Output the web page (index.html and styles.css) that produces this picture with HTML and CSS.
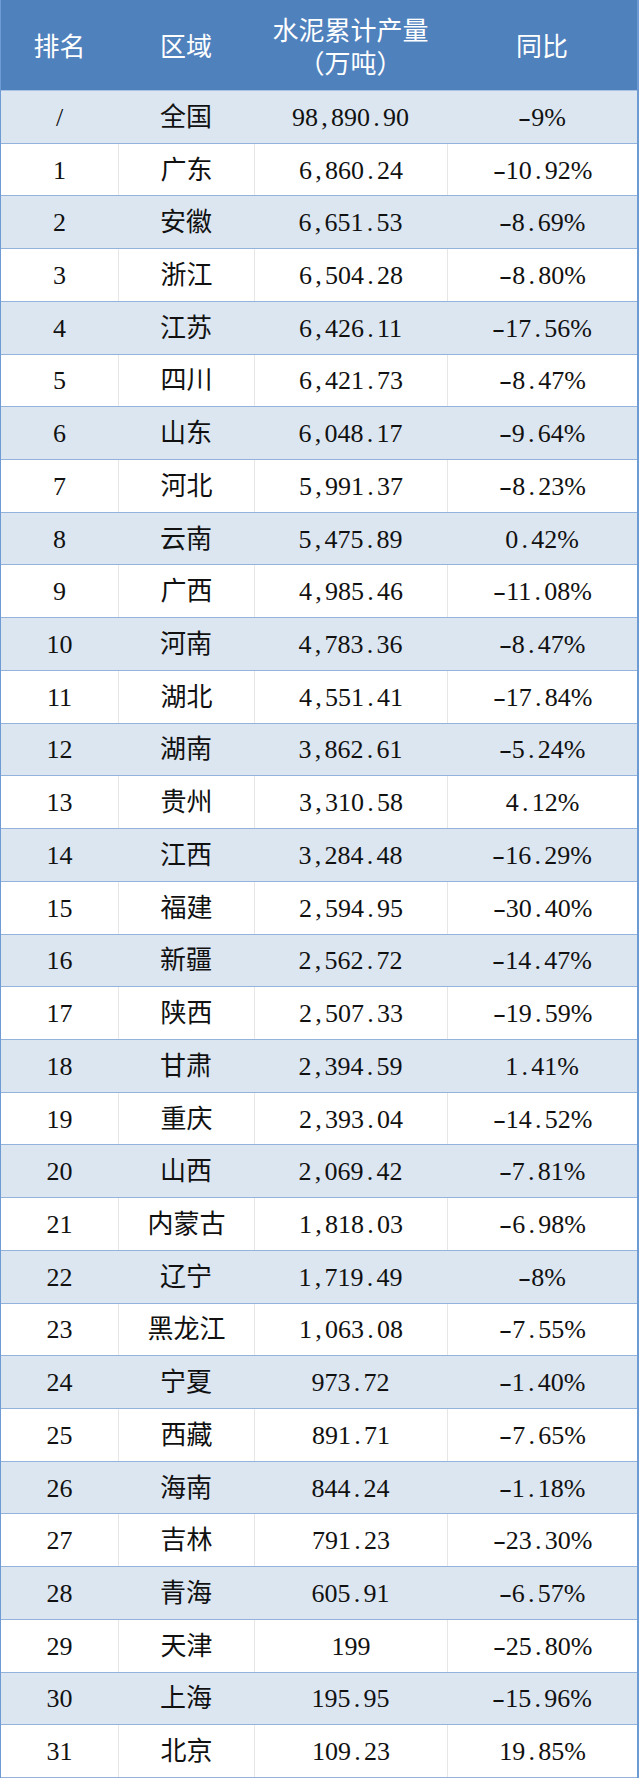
FILE: index.html
```html
<!DOCTYPE html>
<html lang="zh-CN">
<head>
<meta charset="utf-8">
<title>水泥累计产量</title>
<link rel="stylesheet" href="styles.css">
</head>
<body>
<div class="table">
  <div class="head">
    <div class="c">排名</div>
    <div class="c">区域</div>
    <div class="c two">水泥累计产量<br>（万吨）</div>
    <div class="c">同比</div>
  </div>
  <div class="row alt"><div class="c">/</div><div class="c">全国</div><div class="c">98<span class="p">,</span>890<span class="p">.</span>90</div><div class="c"><span class="m">-</span>9%</div></div>
  <div class="row"><div class="c">1</div><div class="c">广东</div><div class="c">6<span class="p">,</span>860<span class="p">.</span>24</div><div class="c"><span class="m">-</span>10<span class="p">.</span>92%</div></div>
  <div class="row alt"><div class="c">2</div><div class="c">安徽</div><div class="c">6<span class="p">,</span>651<span class="p">.</span>53</div><div class="c"><span class="m">-</span>8<span class="p">.</span>69%</div></div>
  <div class="row"><div class="c">3</div><div class="c">浙江</div><div class="c">6<span class="p">,</span>504<span class="p">.</span>28</div><div class="c"><span class="m">-</span>8<span class="p">.</span>80%</div></div>
  <div class="row alt"><div class="c">4</div><div class="c">江苏</div><div class="c">6<span class="p">,</span>426<span class="p">.</span>11</div><div class="c"><span class="m">-</span>17<span class="p">.</span>56%</div></div>
  <div class="row"><div class="c">5</div><div class="c">四川</div><div class="c">6<span class="p">,</span>421<span class="p">.</span>73</div><div class="c"><span class="m">-</span>8<span class="p">.</span>47%</div></div>
  <div class="row alt"><div class="c">6</div><div class="c">山东</div><div class="c">6<span class="p">,</span>048<span class="p">.</span>17</div><div class="c"><span class="m">-</span>9<span class="p">.</span>64%</div></div>
  <div class="row"><div class="c">7</div><div class="c">河北</div><div class="c">5<span class="p">,</span>991<span class="p">.</span>37</div><div class="c"><span class="m">-</span>8<span class="p">.</span>23%</div></div>
  <div class="row alt"><div class="c">8</div><div class="c">云南</div><div class="c">5<span class="p">,</span>475<span class="p">.</span>89</div><div class="c">0<span class="p">.</span>42%</div></div>
  <div class="row"><div class="c">9</div><div class="c">广西</div><div class="c">4<span class="p">,</span>985<span class="p">.</span>46</div><div class="c"><span class="m">-</span>11<span class="p">.</span>08%</div></div>
  <div class="row alt"><div class="c">10</div><div class="c">河南</div><div class="c">4<span class="p">,</span>783<span class="p">.</span>36</div><div class="c"><span class="m">-</span>8<span class="p">.</span>47%</div></div>
  <div class="row"><div class="c">11</div><div class="c">湖北</div><div class="c">4<span class="p">,</span>551<span class="p">.</span>41</div><div class="c"><span class="m">-</span>17<span class="p">.</span>84%</div></div>
  <div class="row alt"><div class="c">12</div><div class="c">湖南</div><div class="c">3<span class="p">,</span>862<span class="p">.</span>61</div><div class="c"><span class="m">-</span>5<span class="p">.</span>24%</div></div>
  <div class="row"><div class="c">13</div><div class="c">贵州</div><div class="c">3<span class="p">,</span>310<span class="p">.</span>58</div><div class="c">4<span class="p">.</span>12%</div></div>
  <div class="row alt"><div class="c">14</div><div class="c">江西</div><div class="c">3<span class="p">,</span>284<span class="p">.</span>48</div><div class="c"><span class="m">-</span>16<span class="p">.</span>29%</div></div>
  <div class="row"><div class="c">15</div><div class="c">福建</div><div class="c">2<span class="p">,</span>594<span class="p">.</span>95</div><div class="c"><span class="m">-</span>30<span class="p">.</span>40%</div></div>
  <div class="row alt"><div class="c">16</div><div class="c">新疆</div><div class="c">2<span class="p">,</span>562<span class="p">.</span>72</div><div class="c"><span class="m">-</span>14<span class="p">.</span>47%</div></div>
  <div class="row"><div class="c">17</div><div class="c">陕西</div><div class="c">2<span class="p">,</span>507<span class="p">.</span>33</div><div class="c"><span class="m">-</span>19<span class="p">.</span>59%</div></div>
  <div class="row alt"><div class="c">18</div><div class="c">甘肃</div><div class="c">2<span class="p">,</span>394<span class="p">.</span>59</div><div class="c">1<span class="p">.</span>41%</div></div>
  <div class="row"><div class="c">19</div><div class="c">重庆</div><div class="c">2<span class="p">,</span>393<span class="p">.</span>04</div><div class="c"><span class="m">-</span>14<span class="p">.</span>52%</div></div>
  <div class="row alt"><div class="c">20</div><div class="c">山西</div><div class="c">2<span class="p">,</span>069<span class="p">.</span>42</div><div class="c"><span class="m">-</span>7<span class="p">.</span>81%</div></div>
  <div class="row"><div class="c">21</div><div class="c">内蒙古</div><div class="c">1<span class="p">,</span>818<span class="p">.</span>03</div><div class="c"><span class="m">-</span>6<span class="p">.</span>98%</div></div>
  <div class="row alt"><div class="c">22</div><div class="c">辽宁</div><div class="c">1<span class="p">,</span>719<span class="p">.</span>49</div><div class="c"><span class="m">-</span>8%</div></div>
  <div class="row"><div class="c">23</div><div class="c">黑龙江</div><div class="c">1<span class="p">,</span>063<span class="p">.</span>08</div><div class="c"><span class="m">-</span>7<span class="p">.</span>55%</div></div>
  <div class="row alt"><div class="c">24</div><div class="c">宁夏</div><div class="c">973<span class="p">.</span>72</div><div class="c"><span class="m">-</span>1<span class="p">.</span>40%</div></div>
  <div class="row"><div class="c">25</div><div class="c">西藏</div><div class="c">891<span class="p">.</span>71</div><div class="c"><span class="m">-</span>7<span class="p">.</span>65%</div></div>
  <div class="row alt"><div class="c">26</div><div class="c">海南</div><div class="c">844<span class="p">.</span>24</div><div class="c"><span class="m">-</span>1<span class="p">.</span>18%</div></div>
  <div class="row"><div class="c">27</div><div class="c">吉林</div><div class="c">791<span class="p">.</span>23</div><div class="c"><span class="m">-</span>23<span class="p">.</span>30%</div></div>
  <div class="row alt"><div class="c">28</div><div class="c">青海</div><div class="c">605<span class="p">.</span>91</div><div class="c"><span class="m">-</span>6<span class="p">.</span>57%</div></div>
  <div class="row"><div class="c">29</div><div class="c">天津</div><div class="c">199</div><div class="c"><span class="m">-</span>25<span class="p">.</span>80%</div></div>
  <div class="row alt"><div class="c">30</div><div class="c">上海</div><div class="c">195<span class="p">.</span>95</div><div class="c"><span class="m">-</span>15<span class="p">.</span>96%</div></div>
  <div class="row"><div class="c">31</div><div class="c">北京</div><div class="c">109<span class="p">.</span>23</div><div class="c">19<span class="p">.</span>85%</div></div>
</div>
</body>
</html>
```

FILE: styles.css
```css
html, body {
  margin: 0;
  padding: 0;
  background: #ffffff;
}

.table {
  width: 639px;
  height: 1778px;
  box-sizing: border-box;
  display: flex;
  flex-direction: column;
  border-left: 1px solid #6f9bd4;
  border-right: 2px solid #6f9bd4;
  font-family: "Liberation Serif", "Noto Sans CJK SC", serif;
  font-size: 26px;
  color: #111111;
}

.head,
.row {
  display: grid;
  grid-template-columns: 117px 136px 193px 1fr;
  box-sizing: border-box;
}

.head {
  flex: 0 0 91px;
  background: #4f81bd;
  color: #ffffff;
  border-bottom: 1px solid #a9c2e3;
  padding-top: 5px;
}

.row {
  flex: 1 1 0;
  min-height: 0;
  background: #ffffff;
  border-bottom: 1px solid #93b3dc;
}

.row.alt {
  background: #dce6f1;
}

.c {
  display: flex;
  align-items: center;
  justify-content: center;
  text-align: center;
  white-space: nowrap;
  line-height: 1;
}

.head .c.two {
  line-height: 33px;
}

.row:not(.alt) .c + .c {
  border-left: 1px solid #e6e6e6;
}

.row .c {
  padding-top: 2px;
}

.p {
  display: inline-block;
  width: 0.5em;
  text-align: center;
}

.m {
  display: inline-block;
  width: 0.5em;
  text-align: center;
  transform: scaleX(1.5);
}
```
